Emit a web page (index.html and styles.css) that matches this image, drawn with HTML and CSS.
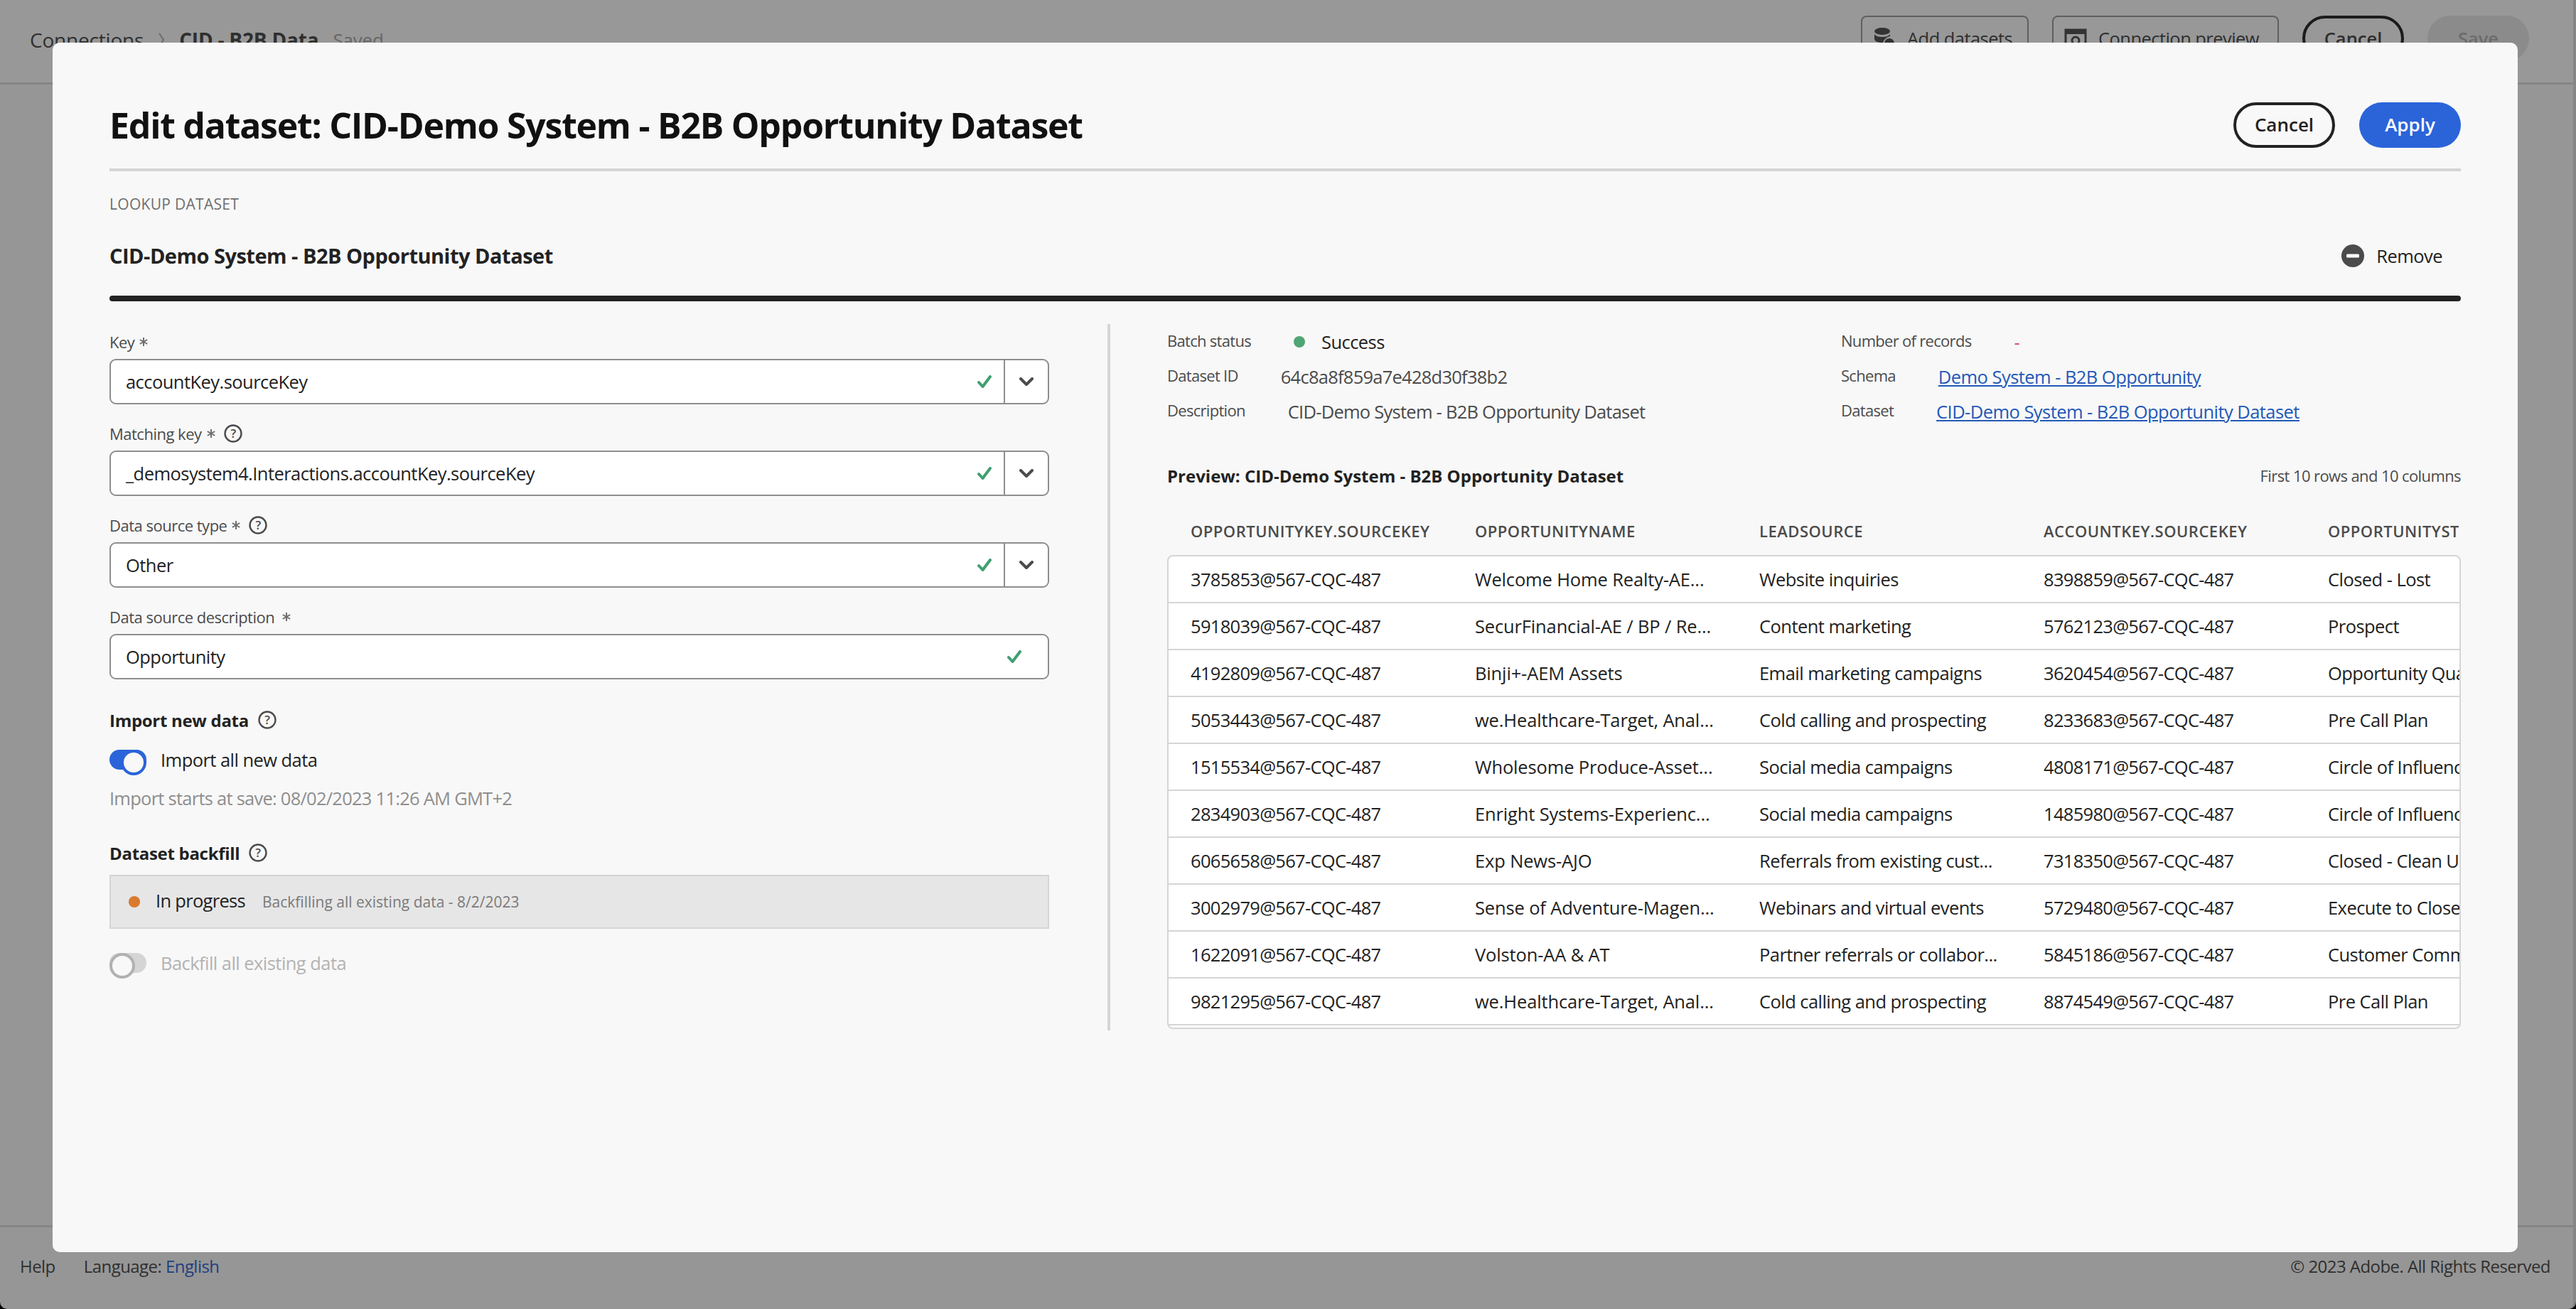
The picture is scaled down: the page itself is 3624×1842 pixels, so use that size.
FILE: index.html
```html
<!DOCTYPE html>
<html>
<head>
    <title>Edit dataset</title>
    <link rel="stylesheet" href="styles.css">
</head>
<body>
    <div class="app">
        <div class="topbar">
            <div class="crumbs">
                <span>Connections</span>
                <svg class="crumb-sep" viewBox="0 0 10 22"><path d="M2 2l6 9-6 9" fill="none" stroke="#6b6b6b" stroke-width="2"/></svg>
                <strong>CID - B2B Data</strong>
                <span class="saved">Saved</span>
            </div>
            <div class="top-actions">
                <div class="top-btn add-btn">
                    <svg class="top-icon" viewBox="0 0 32 32"><ellipse cx="13" cy="6" rx="11" ry="5" fill="#333"/><path d="M2 10c2 3 6 4 11 4s9-1 11-4v3c-5 1-9 5-10 9C7 22 2 20 2 17z" fill="#333"/><circle cx="23" cy="23" r="7" fill="#333"/></svg>
                    <span>Add datasets</span>
                </div>
                <div class="top-btn preview-btn">
                    <svg class="top-icon" viewBox="0 0 32 32"><path d="M2 4h28v24H2z" fill="none" stroke="#333" stroke-width="3"/><path d="M2 4h28v6H2z" fill="#333"/><circle cx="16" cy="19" r="5" fill="none" stroke="#333" stroke-width="3"/></svg>
                    <span>Connection preview</span>
                </div>
                <div class="top-pill cancel-dim">Cancel</div>
                <div class="top-pill save-dim">Save</div>
            </div>
        </div>
        <div class="content"></div>
        <div class="footer">
            <div class="footer-left">
                <span>Help</span>
                <span>Language: <a class="footer-link">English</a></span>
            </div>
            <span>&copy; 2023 Adobe. All Rights Reserved</span>
        </div>
    </div>

    <div class="modal">
        <div class="modal-head">
            <h1>Edit dataset: CID-Demo System - B2B Opportunity Dataset</h1>
            <div class="modal-actions">
                <button class="pill pill-outline">Cancel</button>
                <button class="pill pill-blue">Apply</button>
            </div>
        </div>

        <div class="eyebrow">LOOKUP DATASET</div>
        <div class="section-head">
            <h2>CID-Demo System - B2B Opportunity Dataset</h2>
            <div class="remove">
                <svg class="remove-icon" viewBox="0 0 32 32"><circle cx="16" cy="16" r="16" fill="#4b4b4b"/><rect x="7" y="13.5" width="18" height="5" rx="1.5" fill="#fff"/></svg>
                <span>Remove</span>
            </div>
        </div>
        <div class="thick-rule"></div>

        <div class="columns">
            <div class="col-left">
                <div class="field">
                    <div class="label">Key
                        <svg class="req" viewBox="0 0 14 14"><path d="M7 1v12M1.8 4l10.4 6M1.8 10l10.4-6" stroke="#6e6e6e" stroke-width="2"/></svg>
                    </div>
                    <div class="combo">
                        <span class="combo-value">accountKey.sourceKey</span>
                        <svg class="check" viewBox="0 0 20 18"><path d="M2 10l5.5 6L18 2" fill="none" stroke="#3f9f70" stroke-width="4" stroke-linecap="round" stroke-linejoin="round"/></svg>
                        <span class="combo-btn"><svg class="chevron" viewBox="0 0 20 12"><path d="M2 2l8 8 8-8" fill="none" stroke="#4b4b4b" stroke-width="4" stroke-linecap="round" stroke-linejoin="round"/></svg></span>
                    </div>
                </div>
                <div class="field">
                    <div class="label">Matching key
                        <svg class="req" viewBox="0 0 14 14"><path d="M7 1v12M1.8 4l10.4 6M1.8 10l10.4-6" stroke="#6e6e6e" stroke-width="2"/></svg>
                        <svg class="help" viewBox="0 0 26 26"><circle cx="13" cy="13" r="11.5" fill="none" stroke="#4b4b4b" stroke-width="2.4"/><text x="13" y="19" text-anchor="middle" class="help-mark">?</text></svg>
                    </div>
                    <div class="combo">
                        <span class="combo-value">_demosystem4.Interactions.accountKey.sourceKey</span>
                        <svg class="check" viewBox="0 0 20 18"><path d="M2 10l5.5 6L18 2" fill="none" stroke="#3f9f70" stroke-width="4" stroke-linecap="round" stroke-linejoin="round"/></svg>
                        <span class="combo-btn"><svg class="chevron" viewBox="0 0 20 12"><path d="M2 2l8 8 8-8" fill="none" stroke="#4b4b4b" stroke-width="4" stroke-linecap="round" stroke-linejoin="round"/></svg></span>
                    </div>
                </div>
                <div class="field">
                    <div class="label">Data source type
                        <svg class="req" viewBox="0 0 14 14"><path d="M7 1v12M1.8 4l10.4 6M1.8 10l10.4-6" stroke="#6e6e6e" stroke-width="2"/></svg>
                        <svg class="help" viewBox="0 0 26 26"><circle cx="13" cy="13" r="11.5" fill="none" stroke="#4b4b4b" stroke-width="2.4"/><text x="13" y="19" text-anchor="middle" class="help-mark">?</text></svg>
                    </div>
                    <div class="combo">
                        <span class="combo-value">Other</span>
                        <svg class="check" viewBox="0 0 20 18"><path d="M2 10l5.5 6L18 2" fill="none" stroke="#3f9f70" stroke-width="4" stroke-linecap="round" stroke-linejoin="round"/></svg>
                        <span class="combo-btn"><svg class="chevron" viewBox="0 0 20 12"><path d="M2 2l8 8 8-8" fill="none" stroke="#4b4b4b" stroke-width="4" stroke-linecap="round" stroke-linejoin="round"/></svg></span>
                    </div>
                </div>
                <div class="field">
                    <div class="label label-wide">Data source description
                        <svg class="req" viewBox="0 0 14 14"><path d="M7 1v12M1.8 4l10.4 6M1.8 10l10.4-6" stroke="#6e6e6e" stroke-width="2"/></svg>
                    </div>
                    <div class="combo combo-text">
                        <span class="combo-value">Opportunity</span>
                        <svg class="check" viewBox="0 0 20 18"><path d="M2 10l5.5 6L18 2" fill="none" stroke="#3f9f70" stroke-width="4" stroke-linecap="round" stroke-linejoin="round"/></svg>
                    </div>
                </div>

                <div class="sub-head import-head">Import new data
                    <svg class="help" viewBox="0 0 26 26"><circle cx="13" cy="13" r="11.5" fill="none" stroke="#4b4b4b" stroke-width="2.4"/><text x="13" y="19" text-anchor="middle" class="help-mark">?</text></svg>
                </div>
                <div class="toggle-row import-toggle">
                    <span class="toggle toggle-on"></span>
                    <span>Import all new data</span>
                </div>
                <div class="import-note">Import starts at save: 08/02/2023 11:26 AM GMT+2</div>

                <div class="sub-head backfill-head">Dataset backfill
                    <svg class="help" viewBox="0 0 26 26"><circle cx="13" cy="13" r="11.5" fill="none" stroke="#4b4b4b" stroke-width="2.4"/><text x="13" y="19" text-anchor="middle" class="help-mark">?</text></svg>
                </div>
                <div class="progress-box">
                    <span class="dot dot-orange"></span>
                    <span class="progress-label">In progress</span>
                    <span class="progress-note">Backfilling all existing data - 8/2/2023</span>
                </div>
                <div class="toggle-row backfill-toggle">
                    <span class="toggle toggle-off"></span>
                    <span>Backfill all existing data</span>
                </div>
            </div>

            <div class="col-right">
                <div class="meta">
                    <div class="meta-col">
                        <div class="meta-row"><span class="meta-key">Batch status</span><span class="status"><span class="dot dot-green"></span><span class="status-text">Success</span></span></div>
                        <div class="meta-row"><span class="meta-key">Dataset ID</span><span class="meta-val">64c8a8f859a7e428d30f38b2</span></div>
                        <div class="meta-row"><span class="meta-key">Description</span><span class="meta-val">CID-Demo System - B2B Opportunity Dataset</span></div>
                    </div>
                    <div class="meta-col meta-col-2">
                        <div class="meta-row"><span class="meta-key">Number of records</span><span class="meta-dash">-</span></div>
                        <div class="meta-row"><span class="meta-key">Schema</span><a class="meta-link">Demo System - B2B Opportunity</a></div>
                        <div class="meta-row"><span class="meta-key">Dataset</span><a class="meta-link">CID-Demo System - B2B Opportunity Dataset</a></div>
                    </div>
                </div>

                <div class="preview-head">
                    <strong>Preview: CID-Demo System - B2B Opportunity Dataset</strong>
                    <span class="preview-note">First 10 rows and 10 columns</span>
                </div>

                <div class="table-head">
                    <span>OPPORTUNITYKEY.SOURCEKEY</span>
                    <span>OPPORTUNITYNAME</span>
                    <span>LEADSOURCE</span>
                    <span>ACCOUNTKEY.SOURCEKEY</span>
                    <span>OPPORTUNITYSTAGE</span>
                </div>
                <div class="table-box">
                    <div class="table-row"><span>3785853@567-CQC-487</span><span>Welcome Home Realty-AE...</span><span>Website inquiries</span><span>8398859@567-CQC-487</span><span>Closed - Lost</span></div>
                    <div class="table-row"><span>5918039@567-CQC-487</span><span>SecurFinancial-AE / BP / Re...</span><span>Content marketing</span><span>5762123@567-CQC-487</span><span>Prospect</span></div>
                    <div class="table-row"><span>4192809@567-CQC-487</span><span>Binji+-AEM Assets</span><span>Email marketing campaigns</span><span>3620454@567-CQC-487</span><span>Opportunity Qualified</span></div>
                    <div class="table-row"><span>5053443@567-CQC-487</span><span>we.Healthcare-Target, Anal...</span><span>Cold calling and prospecting</span><span>8233683@567-CQC-487</span><span>Pre Call Plan</span></div>
                    <div class="table-row"><span>1515534@567-CQC-487</span><span>Wholesome Produce-Asset...</span><span>Social media campaigns</span><span>4808171@567-CQC-487</span><span>Circle of Influence</span></div>
                    <div class="table-row"><span>2834903@567-CQC-487</span><span>Enright Systems-Experienc...</span><span>Social media campaigns</span><span>1485980@567-CQC-487</span><span>Circle of Influence</span></div>
                    <div class="table-row"><span>6065658@567-CQC-487</span><span>Exp News-AJO</span><span>Referrals from existing cust...</span><span>7318350@567-CQC-487</span><span>Closed - Clean Up</span></div>
                    <div class="table-row"><span>3002979@567-CQC-487</span><span>Sense of Adventure-Magen...</span><span>Webinars and virtual events</span><span>5729480@567-CQC-487</span><span>Execute to Close</span></div>
                    <div class="table-row"><span>1622091@567-CQC-487</span><span>Volston-AA &amp; AT</span><span>Partner referrals or collabor...</span><span>5845186@567-CQC-487</span><span>Customer Commit</span></div>
                    <div class="table-row"><span>9821295@567-CQC-487</span><span>we.Healthcare-Target, Anal...</span><span>Cold calling and prospecting</span><span>8874549@567-CQC-487</span><span>Pre Call Plan</span></div>
                </div>
            </div>
        </div>
    </div>
</body>
</html>
```
FILE: styles.css
```css
* {
    box-sizing: border-box;
}

html,
body {
    margin: 0;
    height: 100%;
    background-color: #000000;
}

body {
    font-family: "Open Sans", "Noto Sans", sans-serif;
    font-size: 25.5px;
    letter-spacing: -0.55px;
    color: #222222;
    overflow: hidden;
}

/* dimmed page behind the dialog */
.app {
    height: 1842px;
    display: flex;
    flex-direction: column;
    background-color: #969696;
    border-radius: 0 0 10px 10px;
    border-right: 4px solid #868686;
    color: #2f2f2f;
}

.topbar {
    height: 119px;
    padding: 22px 62px 0 42px;
    display: flex;
    justify-content: space-between;
    border-bottom: 3px solid #858585;
    background-color: #989898;
}

.crumbs {
    display: flex;
    align-items: center;
    height: 68px;
    gap: 20px;
    font-size: 28px;
    letter-spacing: -0.2px;
}

.crumb-sep {
    width: 10px;
    height: 22px;
}

.saved {
    color: #666666;
    font-size: 26px;
}

.top-actions {
    display: flex;
    gap: 33px;
}

.top-btn {
    height: 64px;
    padding: 0 15px;
    display: flex;
    align-items: center;
    gap: 16px;
    border: 2px solid #5f5f5f;
    border-radius: 8px;
    white-space: nowrap;
}

.top-icon {
    width: 32px;
    height: 32px;
    flex: none;
}

.add-btn {
    width: 236px;
}

.preview-btn {
    width: 319px;
}

.top-pill {
    width: 143px;
    height: 64px;
    border-radius: 32px;
    display: flex;
    align-items: center;
    justify-content: center;
    font-weight: 600;
    letter-spacing: 0;
}

.cancel-dim {
    border: 4px solid #1b1b1b;
}

.save-dim {
    background-color: #8b8b8b;
    color: #6b6b6b;
}

.content {
    flex: 1;
}

.footer {
    height: 118px;
    padding: 38px 32px 0 28px;
    display: flex;
    justify-content: space-between;
    border-top: 3px solid #858585;
    font-size: 24px;
    letter-spacing: -0.55px;
}

.footer-left {
    display: flex;
    gap: 40px;
}

.footer-link {
    color: #213f80;
}

/* dialog */
.modal {
    position: absolute;
    left: 74px;
    top: 60px;
    width: 3468px;
    height: 1702px;
    padding: 84px 80px 0;
    background-color: #f8f8f8;
    border-radius: 10px;
}

.modal-head {
    display: flex;
    justify-content: space-between;
    padding-bottom: 29px;
    border-bottom: 4px solid #d5d5d5;
}

h1 {
    margin: 0;
    font-size: 50px;
    line-height: 64px;
    font-weight: 700;
    color: #111111;
    letter-spacing: -1.25px;
}

.modal-actions {
    display: flex;
    gap: 34px;
}

.pill {
    width: 143px;
    height: 64px;
    padding-bottom: 3px;
    border-radius: 32px;
    font-family: inherit;
    font-size: 26px;
    font-weight: 600;
}

.pill-outline {
    background-color: #f8f8f8;
    border: 4px solid #222222;
    color: #222222;
}

.pill-blue {
    background-color: #2b64d9;
    border: none;
    color: #ffffff;
}

.eyebrow {
    margin-top: 34px;
    font-size: 21px;
    line-height: 24px;
    letter-spacing: 0.3px;
    color: #6e6e6e;
}

.section-head {
    margin-top: 41px;
    height: 40px;
    display: flex;
    align-items: center;
    justify-content: space-between;
}

h2 {
    margin: 0 0 2px;
    font-size: 29px;
    font-weight: 700;
    letter-spacing: -0.5px;
    color: #222222;
}

.remove {
    display: flex;
    align-items: center;
    gap: 17px;
    padding-right: 26px;
}

.remove-icon {
    width: 32px;
    height: 32px;
}

.thick-rule {
    margin-top: 36px;
    height: 8px;
    border-radius: 4px;
    background-color: #222222;
}

.columns {
    margin-top: 32px;
    display: grid;
    grid-template-columns: 1408px minmax(0, 1fr);
}

.col-left {
    height: 994px;
    padding: 12px 82px 0 0;
    border-right: 4px solid #d5d5d5;
}

.col-right {
    padding-left: 80px;
}

.field {
    margin-bottom: 28px;
}

.label {
    height: 28px;
    padding-bottom: 2px;
    margin-bottom: 9px;
    display: flex;
    align-items: center;
    gap: 6px;
    font-size: 22px;
    letter-spacing: -0.5px;
    color: #4b4b4b;
}

.label-wide {
    gap: 10px;
}

.req {
    width: 14px;
    height: 14px;
}

.combo {
    height: 64px;
    display: flex;
    align-items: center;
    background-color: #ffffff;
    border: 2px solid #8e8e8e;
    border-radius: 9px;
    padding-left: 21px;
}

.combo-value {
    flex: 1;
}

.check {
    width: 20px;
    height: 18px;
    margin-right: 17px;
}

.combo-text .check {
    margin-right: 37px;
}

.combo-btn {
    width: 62px;
    height: 100%;
    display: flex;
    align-items: center;
    justify-content: center;
    border-left: 2px solid #8e8e8e;
}

.chevron {
    width: 20px;
    height: 12px;
}

.help {
    width: 26px;
    height: 26px;
    margin-left: 5px;
}

.help-mark {
    font-size: 17px;
    font-weight: 600;
    fill: #4b4b4b;
}

.sub-head {
    height: 32px;
    display: flex;
    align-items: center;
    gap: 8px;
    font-weight: 700;
    font-size: 24px;
    letter-spacing: -0.3px;
}

.import-head {
    margin-top: 41px;
}

.toggle-row {
    height: 28px;
    display: flex;
    align-items: center;
    gap: 20px;
}

.import-toggle {
    margin-top: 26px;
}

.toggle {
    position: relative;
    width: 52px;
    height: 28px;
    border-radius: 14px;
}

.toggle::after {
    content: "";
    position: absolute;
    top: 0;
    width: 28px;
    height: 28px;
    border-radius: 50%;
    background-color: #f8f8f8;
    border-style: solid;
    border-width: 4px;
}

.toggle-on {
    background-color: #2b64d9;
}

.toggle-on::after {
    right: 0;
    border-color: #2b64d9;
}

.toggle-off {
    background-color: #d5d5d5;
}

.toggle-off::after {
    left: 0;
    border-color: #b1b1b1;
}

.import-note {
    margin-top: 24px;
    line-height: 32px;
    letter-spacing: -0.75px;
    color: #8e8e8e;
}

.backfill-head {
    margin-top: 45px;
}

.progress-box {
    margin-top: 15px;
    height: 76px;
    padding-left: 25px;
    display: flex;
    align-items: center;
    background-color: #e6e6e6;
    border: 2px solid #d5d5d5;
}

.dot {
    width: 16px;
    height: 16px;
    border-radius: 50%;
    flex: none;
}

.dot-orange {
    background-color: #d97a2e;
}

.dot-green {
    background-color: #4fa574;
}

.progress-label {
    margin-left: 22px;
    padding-bottom: 4px;
    letter-spacing: -0.7px;
}

.progress-note {
    margin-left: 24px;
    font-size: 21px;
    letter-spacing: 0;
    color: #7a7a7a;
}

.backfill-toggle {
    margin-top: 34px;
    color: #b3b3b3;
}

/* right column */
.meta {
    display: flex;
}

.meta-col {
    flex: none;
    width: 948px;
}

.meta-col-2 {
    width: 872px;
}

.meta-row {
    height: 49px;
    display: flex;
    align-items: center;
    gap: 60px;
}

.meta-key {
    padding-bottom: 3px;
    font-size: 22px;
    letter-spacing: -0.7px;
    color: #4b4b4b;
}

.meta-val {
    letter-spacing: -0.75px;
    color: #4b4b4b;
}

.status {
    display: flex;
    align-items: center;
    gap: 23px;
}

.status-text {
    color: #222222;
}

.meta-dash {
    color: #d0525a;
}

.meta-link {
    color: #2359b8;
    text-decoration: underline;
}

.preview-head {
    margin-top: 50px;
    height: 32px;
    display: flex;
    align-items: center;
    justify-content: space-between;
    font-size: 24px;
    letter-spacing: 0;
}

.preview-note {
    font-size: 22px;
    letter-spacing: -0.6px;
    color: #4b4b4b;
}

.table-head {
    margin-top: 47px;
    margin-right: 3px;
    height: 32px;
    padding-left: 33px;
    padding-bottom: 2px;
    display: grid;
    grid-template-columns: repeat(5, 400px);
    overflow: hidden;
    align-items: center;
    font-size: 22px;
    font-weight: 600;
    letter-spacing: 0.5px;
    color: #4b4b4b;
}

.table-box {
    margin-top: 17px;
    height: 667px;
    background-color: #ffffff;
    border: 2px solid #d5d5d5;
    border-radius: 8px;
    overflow: hidden;
}

.table-row {
    height: 66px;
    padding-left: 31px;
    display: grid;
    grid-template-columns: repeat(5, 400px);
    align-items: center;
    border-bottom: 2px solid #d5d5d5;
    white-space: nowrap;
}

.table-row span:nth-child(1),
.table-row span:nth-child(4) {
    letter-spacing: -0.7px;
}

.table-row span:nth-child(2) {
    letter-spacing: -0.15px;
}
```
